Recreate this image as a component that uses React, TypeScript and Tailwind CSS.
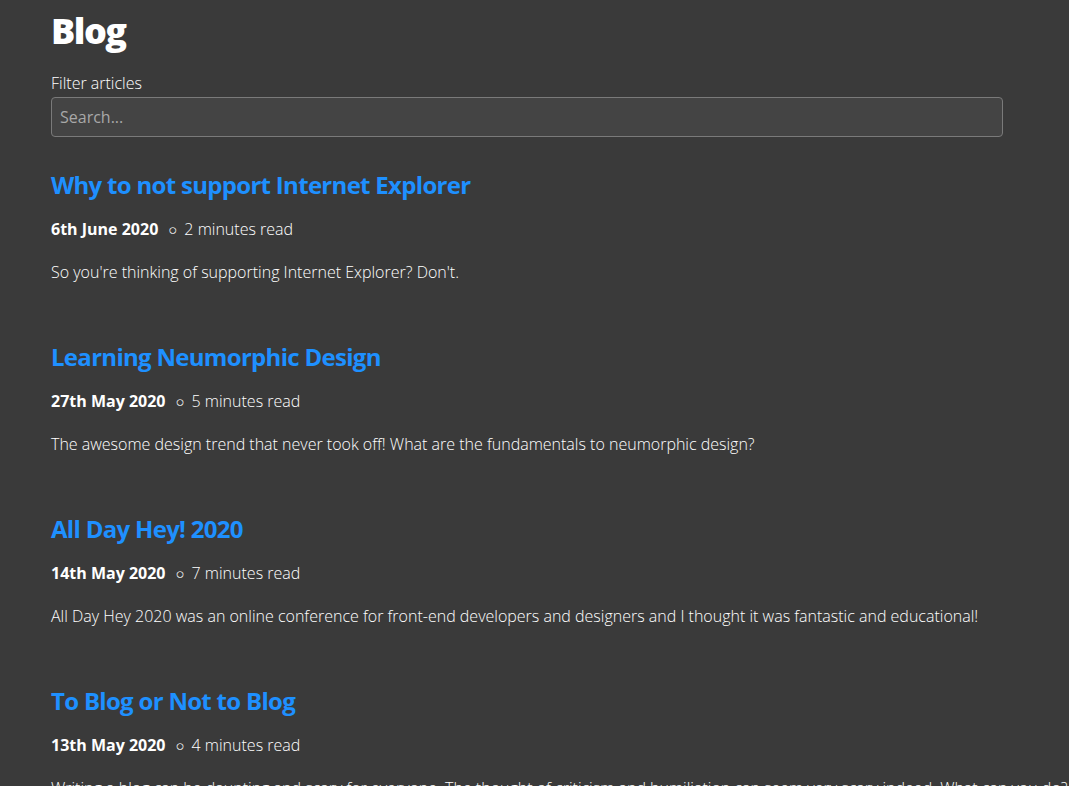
const posts = [
  {
    title: 'Why to not support Internet Explorer',
    date: '6th June 2020',
    read: '2 minutes read',
    summary: "So you're thinking of supporting Internet Explorer? Don't.",
  },
  {
    title: 'Learning Neumorphic Design',
    date: '27th May 2020',
    read: '5 minutes read',
    summary: 'The awesome design trend that never took off! What are the fundamentals to neumorphic design?',
  },
  {
    title: 'All Day Hey! 2020',
    date: '14th May 2020',
    read: '7 minutes read',
    summary:
      'All Day Hey 2020 was an online conference for front-end developers and designers and I thought it was fantastic and educational!',
  },
  {
    title: 'To Blog or Not to Blog',
    date: '13th May 2020',
    read: '4 minutes read',
    summary:
      'Writing a blog can be daunting and scary for everyone. The thought of criticism and humiliation can seem very scary indeed. What can you do?',
  },
];

export default function App() {
  return (
    <div className="min-h-screen bg-[#3a3a3a] text-white font-['Open_Sans',sans-serif]">
      <div className="w-[952px] ml-[51px] pt-[6px]">
        {/* Header */}
        <h1 className="text-[36px] leading-[50px] font-extrabold tracking-[-1.5px]">Blog</h1>

        {/* Filter */}
        <label className="block mt-[15px] text-base leading-[24px] font-light">Filter articles</label>
        <input
          type="text"
          placeholder="Search..."
          className="mt-[2px] w-full h-[40px] px-2 bg-[#444444] border border-[#7a7a7a] rounded-[4px] text-base font-normal text-white placeholder:text-[#a8a8a8] outline-none"
        />

        {/* Posts */}
        <div className="mt-[32px]">
          {posts.map((post) => (
            <article key={post.title} className="h-[172px]">
              <h2 className="text-[24px] leading-[32px] font-bold text-[#1e90ff] tracking-[-0.7px]">
                {post.title}
              </h2>
              <div className="mt-[16px] flex items-center text-base leading-[24px]">
                <span className="font-bold">{post.date}</span>
                <span className="ml-[10px] mr-[7px] text-[15px] leading-none">○</span>
                <span className="font-light">{post.read}</span>
              </div>
              <p className="mt-[19px] text-base leading-[24px] font-light whitespace-nowrap">{post.summary}</p>
            </article>
          ))}
        </div>
      </div>
    </div>
  );
}
